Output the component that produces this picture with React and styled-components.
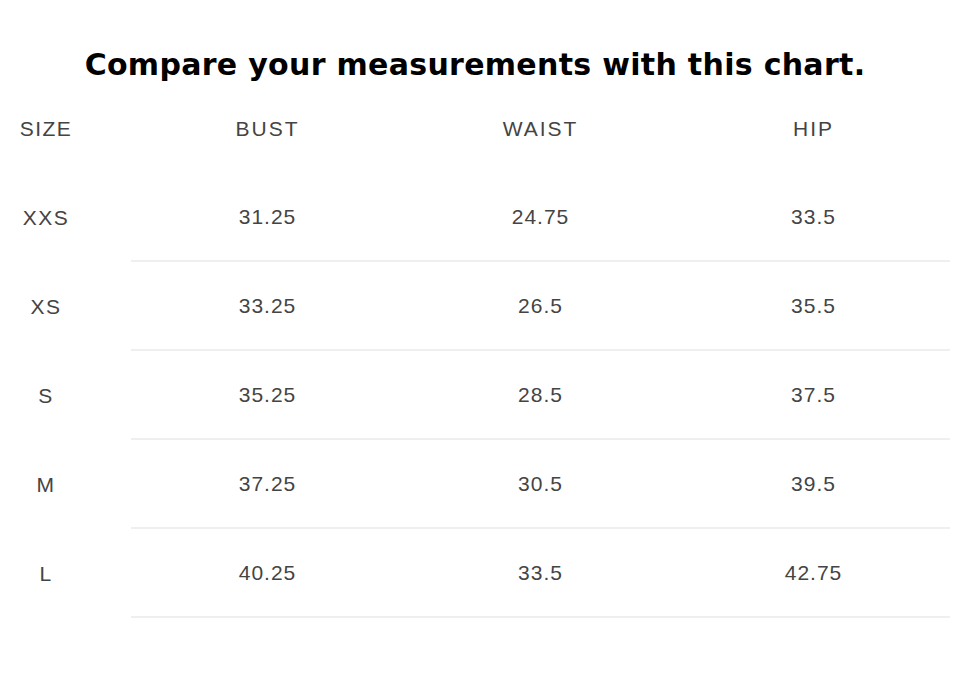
import React from 'react';
import styled, { createGlobalStyle } from 'styled-components';

const GlobalStyle = createGlobalStyle`
  html, body {
    margin: 0;
    padding: 0;
    background: #fff;
  }
`;

const rows = [
  { size: 'XXS', bust: '31.25', waist: '24.75', hip: '33.5' },
  { size: 'XS', bust: '33.25', waist: '26.5', hip: '35.5' },
  { size: 'S', bust: '35.25', waist: '28.5', hip: '37.5' },
  { size: 'M', bust: '37.25', waist: '30.5', hip: '39.5' },
  { size: 'L', bust: '40.25', waist: '33.5', hip: '42.75' },
];

const SizeChart = () => {
  return (
    <ChartWrapper>
      <Title>Compare your measurements with this chart.</Title>
      <Row>
        <SizeCell>SIZE</SizeCell>
        <Values>
          <Cell caps>BUST</Cell>
          <Cell caps>WAIST</Cell>
          <Cell caps>HIP</Cell>
        </Values>
      </Row>
      {rows.map((r) => (
        <Row key={r.size}>
          <SizeCell>{r.size}</SizeCell>
          <Values bordered>
            <Cell>{r.bust}</Cell>
            <Cell>{r.waist}</Cell>
            <Cell>{r.hip}</Cell>
          </Values>
        </Row>
      ))}
    </ChartWrapper>
  );
};

const ChartWrapper = styled.div`
  width: 950px;
  padding-top: 48px;
  font-family: 'Liberation Sans', Arial, sans-serif;
`;

const Title = styled.h2`
  margin: 0 0 2px;
  text-align: center;
  font-family: 'DejaVu Sans', 'Liberation Sans', sans-serif;
  font-size: 30px;
  line-height: 34px;
  font-weight: 700;
  letter-spacing: 0.3px;
  color: #000;
`;

const Row = styled.div`
  display: flex;
  height: 89px;
`;

const SizeCell = styled.div`
  width: 92px;
  display: flex;
  align-items: center;
  justify-content: center;
  font-size: 21px;
  letter-spacing: 1.5px;
  color: #444;
`;

const Values = styled.div`
  margin-left: 39px;
  flex: 1;
  display: flex;
  border-bottom: ${(p) => (p.bordered ? '2px solid #efefef' : 'none')};
`;

const Cell = styled.div`
  flex: 1;
  display: flex;
  align-items: center;
  justify-content: center;
  font-size: 21px;
  letter-spacing: ${(p) => (p.caps ? '2px' : '1px')};
  color: #444;
`;

const App = () => (
  <>
    <GlobalStyle />
    <SizeChart />
  </>
);

export default App;
